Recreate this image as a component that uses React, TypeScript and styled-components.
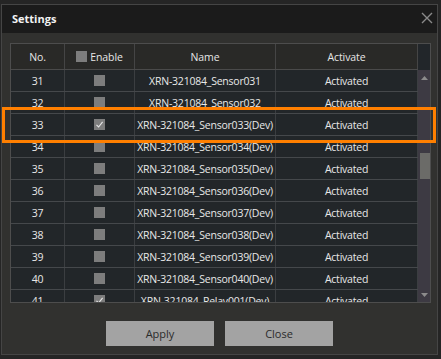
import React from 'react';
import styled, { createGlobalStyle } from 'styled-components';

interface Sensor {
  no: number;
  enabled: boolean;
  name: string;
  activate: string;
}

const sensors: Sensor[] = [
  { no: 31, enabled: false, name: 'XRN-321084_Sensor031', activate: 'Activated' },
  { no: 32, enabled: false, name: 'XRN-321084_Sensor032', activate: 'Activated' },
  { no: 33, enabled: true, name: 'XRN-321084_Sensor033(Dev)', activate: 'Activated' },
  { no: 34, enabled: false, name: 'XRN-321084_Sensor034(Dev)', activate: 'Activated' },
  { no: 35, enabled: false, name: 'XRN-321084_Sensor035(Dev)', activate: 'Activated' },
  { no: 36, enabled: false, name: 'XRN-321084_Sensor036(Dev)', activate: 'Activated' },
  { no: 37, enabled: false, name: 'XRN-321084_Sensor037(Dev)', activate: 'Activated' },
  { no: 38, enabled: false, name: 'XRN-321084_Sensor038(Dev)', activate: 'Activated' },
  { no: 39, enabled: false, name: 'XRN-321084_Sensor039(Dev)', activate: 'Activated' },
  { no: 40, enabled: false, name: 'XRN-321084_Sensor040(Dev)', activate: 'Activated' },
  { no: 41, enabled: true, name: 'XRN-321084_Relay001(Dev)', activate: 'Activated' },
];

const COLUMNS = '54px 70px 141px 142px';

const App: React.FC = () => {
  return (
    <>
      <GlobalStyle />
      <Dialog>
        <TitleBar>
          <Title>Settings</Title>
          <CloseIcon width="12" height="12" viewBox="0 0 12 12">
            <path d="M1 1 L11 11 M11 1 L1 11" stroke="#8a8a8a" strokeWidth="1.4" />
          </CloseIcon>
        </TitleBar>
        <Body>
          <TableFrame>
            <TableMain>
              <HeaderRow>
                <HeaderCell>No.</HeaderCell>
                <HeaderCell>
                  <CheckBox />
                  <span>Enable</span>
                </HeaderCell>
                <HeaderCell>Name</HeaderCell>
                <HeaderCell>Activate</HeaderCell>
              </HeaderRow>
              <Viewport>
                {sensors.map((s) => (
                  <Row key={s.no}>
                    <Cell>{s.no}</Cell>
                    <Cell>
                      <CheckBox>
                        {s.enabled && (
                          <svg width="9" height="9" viewBox="0 0 9 9">
                            <path d="M1.5 4.8 L3.6 7 L7.6 1.8" stroke="#e8e8e8" strokeWidth="1.1" fill="none" />
                          </svg>
                        )}
                      </CheckBox>
                    </Cell>
                    <Cell>{s.name}</Cell>
                    <Cell>{s.activate}</Cell>
                  </Row>
                ))}
              </Viewport>
            </TableMain>
            <ScrollColumn>
              <ScrollHead />
              <ScrollTrack>
                <Arrow viewBox="0 0 7 4" width="7" height="4">
                  <path d="M0 4 L3.5 0 L7 4 Z" fill="#8c8c8c" />
                </Arrow>
                <TrackSpace>
                  <Thumb />
                </TrackSpace>
                <Arrow viewBox="0 0 7 4" width="7" height="4">
                  <path d="M0 0 L7 0 L3.5 4 Z" fill="#8c8c8c" />
                </Arrow>
              </ScrollTrack>
            </ScrollColumn>
          </TableFrame>
          <ButtonBar>
            <DialogButton>Apply</DialogButton>
            <DialogButton>Close</DialogButton>
          </ButtonBar>
        </Body>
        <Highlight />
      </Dialog>
    </>
  );
};

export default App;

const GlobalStyle = createGlobalStyle`
  html, body {
    margin: 0;
    padding: 0;
    background: #252525;
    width: 441px;
    height: 359px;
    overflow: hidden;
  }
  body {
    font-family: 'Open Sans', 'Noto Sans', sans-serif;
  }
`;

const Dialog = styled.div`
  position: relative;
  box-sizing: border-box;
  margin: 4px 0 0 1px;
  width: 437px;
  height: 351px;
  background: #31312f;
  border: 1px solid #454545;
  display: flex;
  flex-direction: column;
`;

const TitleBar = styled.div`
  height: 28px;
  background: #1b1b1b;
  display: flex;
  align-items: center;
  justify-content: space-between;
  padding: 0 4px 0 10px;
  flex-shrink: 0;
`;

const Title = styled.div`
  color: #f2f2f2;
  font-weight: bold;
  font-size: 11px;
  margin-top: -1px;
`;

const CloseIcon = styled.svg`
  margin-top: -3px;
`;

const Body = styled.div`
  padding: 10px 0 0 8px;
  display: flex;
  flex-direction: column;
`;

const TableFrame = styled.div`
  width: 421px;
  height: 260px;
  box-sizing: border-box;
  border: 1px solid #4d4d4d;
  display: flex;
  overflow: hidden;
`;

const TableMain = styled.div`
  width: 407px;
  display: flex;
  flex-direction: column;
`;

const HeaderRow = styled.div`
  display: grid;
  grid-template-columns: ${COLUMNS};
  height: 25px;
  background: #292927;
  border-bottom: 1px solid #4a4a4a;
  flex-shrink: 0;
`;

const HeaderCell = styled.div`
  display: flex;
  align-items: center;
  justify-content: center;
  gap: 3px;
  color: #e6e6e6;
  font-size: 10.5px;
  letter-spacing: -0.1px;
  border-right: 1px solid #454545;
`;

const Viewport = styled.div`
  flex: 1;
  overflow: hidden;
  background: #222629;
`;

const Row = styled.div`
  display: grid;
  grid-template-columns: ${COLUMNS};
  height: 22px;
  box-sizing: border-box;
  border-bottom: 1px solid #45484b;
`;

const Cell = styled.div`
  display: flex;
  align-items: center;
  justify-content: center;
  color: #e8e8e8;
  font-size: 10.5px;
  letter-spacing: -0.22px;
  white-space: nowrap;
  overflow: hidden;
  border-right: 1px solid #3b3e41;
`;

const CheckBox = styled.div`
  width: 11px;
  height: 11px;
  background: #7d7d7d;
  display: flex;
  align-items: center;
  justify-content: center;
`;

const ScrollColumn = styled.div`
  width: 14px;
  display: flex;
  flex-direction: column;
`;

const ScrollHead = styled.div`
  height: 26px;
  background: #22262a;
  flex-shrink: 0;
`;

const ScrollTrack = styled.div`
  flex: 1;
  background: #3d3a43;
  display: flex;
  flex-direction: column;
  align-items: center;
  padding: 6px 0 5px;
`;

const Arrow = styled.svg`
  flex-shrink: 0;
`;

const TrackSpace = styled.div`
  flex: 1;
  width: 100%;
  padding-top: 73px;
  box-sizing: border-box;
`;

const Thumb = styled.div`
  margin-left: 2px;
  width: 11px;
  height: 26px;
  background: #6b6b68;
`;

const ButtonBar = styled.div`
  display: flex;
  justify-content: center;
  gap: 11px;
  margin-top: 18px;
  padding-right: 8px;
`;

const DialogButton = styled.button`
  width: 108px;
  height: 25px;
  background: #a3a3a3;
  border: none;
  color: #2b2b2b;
  font-family: 'Open Sans', 'Noto Sans', sans-serif;
  font-size: 11px;
  padding: 0;
`;

const Highlight = styled.div`
  position: absolute;
  left: 0px;
  top: 102px;
  width: 434px;
  height: 36px;
  box-sizing: border-box;
  border: 3px solid #ff7f00;
  pointer-events: none;
`;
